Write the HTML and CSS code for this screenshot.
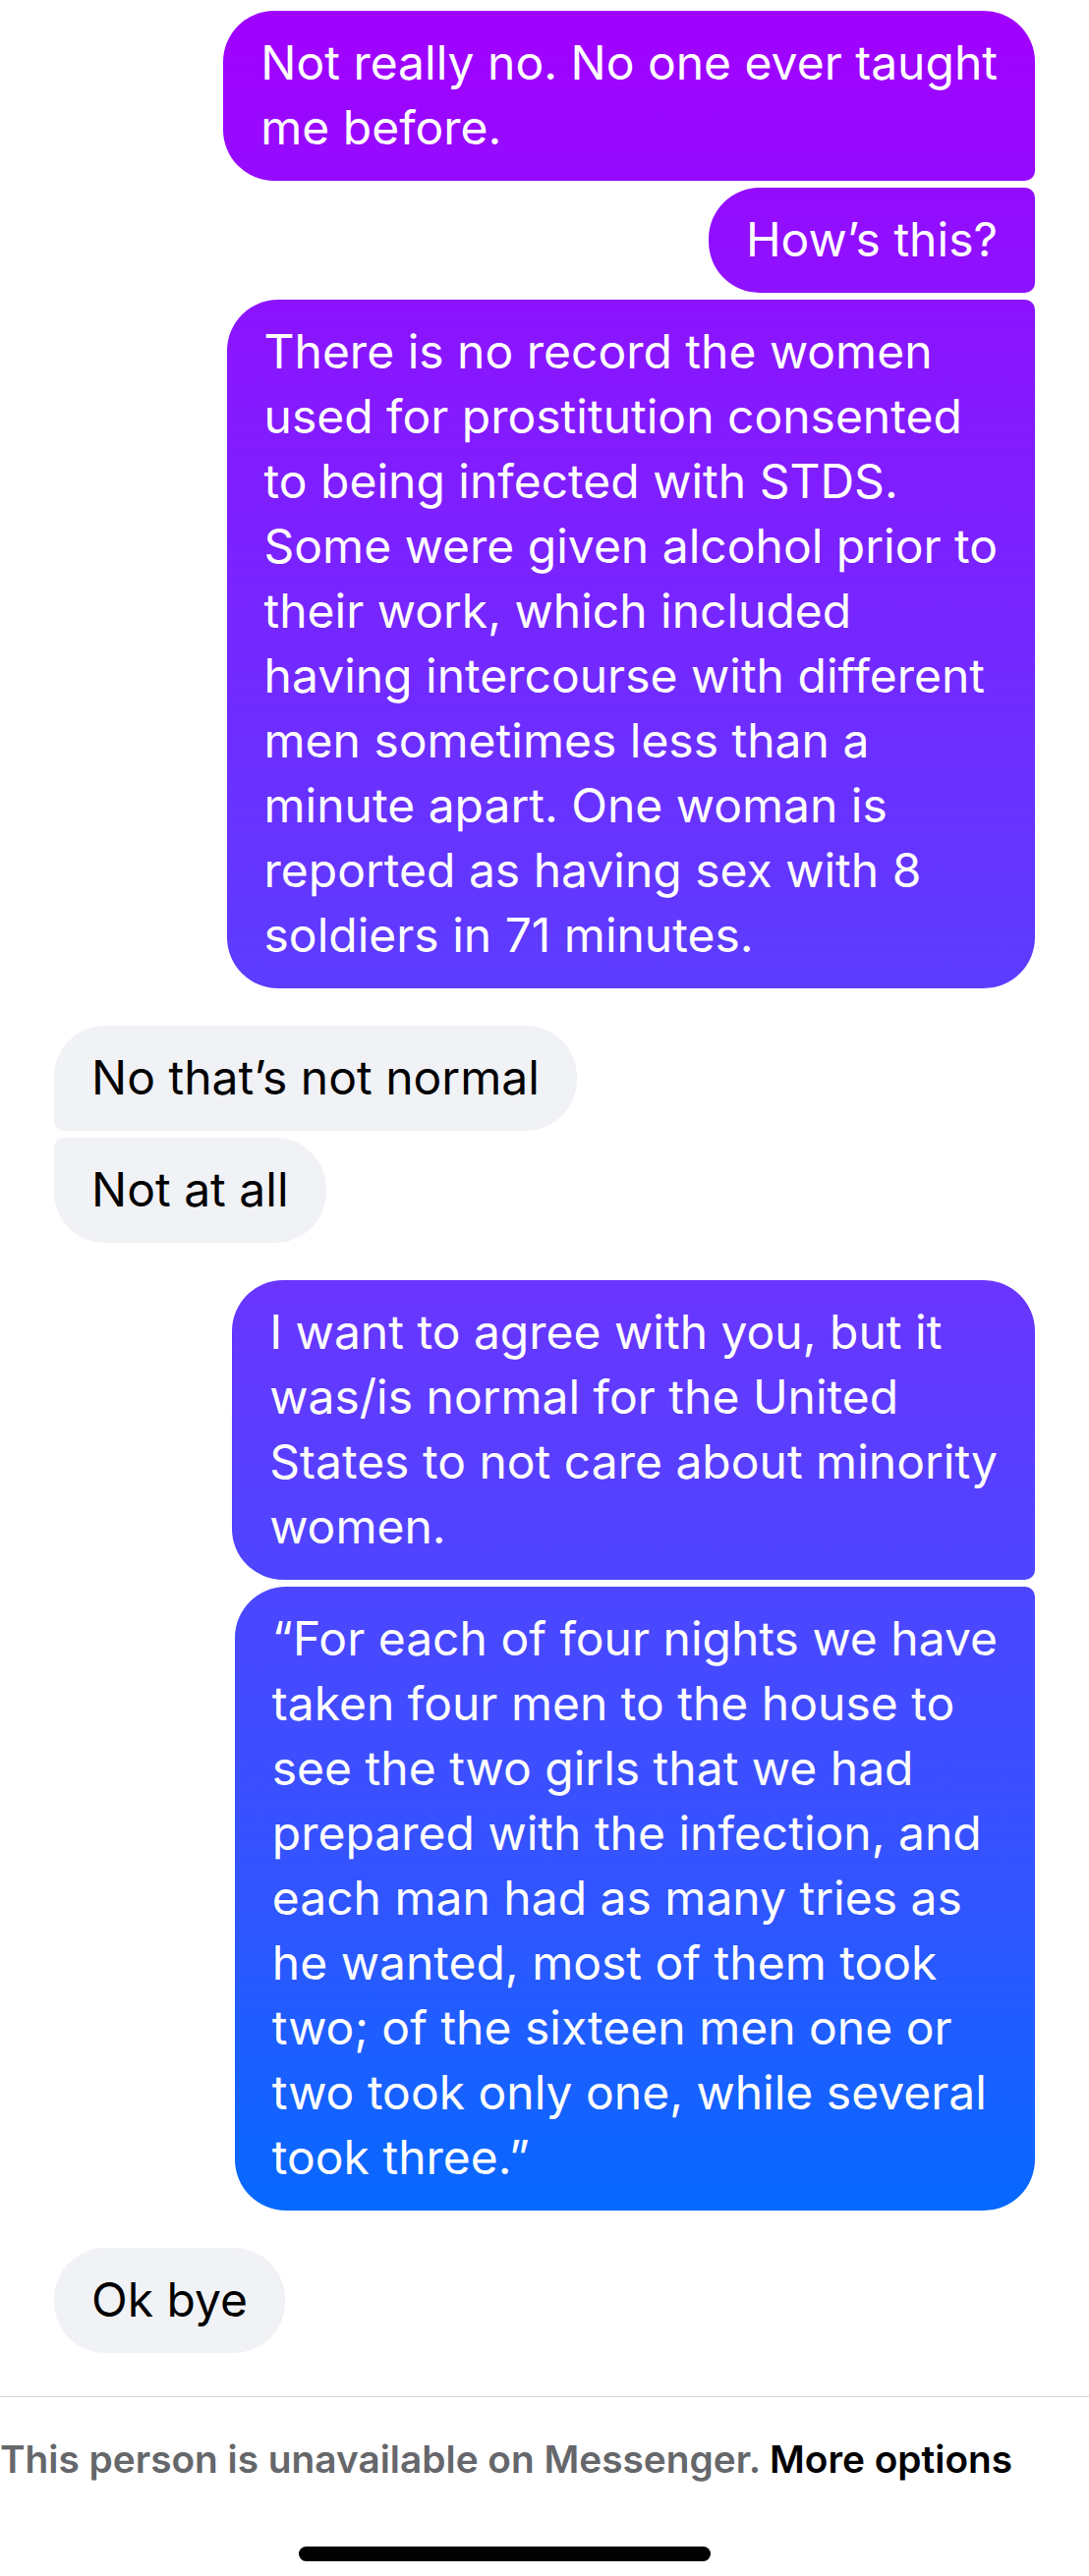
FILE: index.html
```html
<!DOCTYPE html>
<html lang="en">
<head>
<meta charset="utf-8">
<title>Messenger</title>
<link rel="stylesheet" href="styles.css">
</head>
<body>
<main class="chat">
  <section class="group sent">
    <div class="bubble first">Not really no. No one ever taught<br>me before.</div>
    <div class="bubble mid">How’s this?</div>
    <div class="bubble last">There is no record the women<br>used for prostitution consented<br>to being infected with STDS.<br>Some were given alcohol prior to<br>their work, which included<br>having intercourse with different<br>men sometimes less than a<br>minute apart. One woman is<br>reported as having sex with 8<br>soldiers in 71 minutes.</div>
  </section>
  <section class="group received">
    <div class="bubble first">No that’s not normal</div>
    <div class="bubble last">Not at all</div>
  </section>
  <section class="group sent">
    <div class="bubble first">I want to agree with you, but it<br>was/is normal for the United<br>States to not care about minority<br>women.</div>
    <div class="bubble last">“For each of four nights we have<br>taken four men to the house to<br>see the two girls that we had<br>prepared with the infection, and<br>each man had as many tries as<br>he wanted, most of them took<br>two; of the sixteen men one or<br>two took only one, while several<br>took three.”</div>
  </section>
  <section class="group received">
    <div class="bubble single">Ok bye</div>
  </section>
</main>
<div class="divider"></div>
<footer class="notice"><span class="muted">This person is unavailable on Messenger.</span> <span class="action">More options</span></footer>
<div class="home"><div class="home-bar"></div></div>
</body>
</html>
```

FILE: styles.css
```css
html, body {
  margin: 0;
  padding: 0;
  background: #ffffff;
}

body {
  font-family: Inter, "Noto Sans", "Liberation Sans", sans-serif;
  width: 1108px;
  overflow: hidden;
}

.chat {
  padding: 11px 55px 0;
  display: flex;
  flex-direction: column;
  gap: 38px;
}

.group {
  display: flex;
  flex-direction: column;
  gap: 7px;
}

.sent {
  align-items: flex-end;
}

.received {
  align-items: flex-start;
}

.bubble {
  padding: 20px 38px 21px 38px;
  font-size: 48px;
  letter-spacing: 0;
  line-height: 66px;
  white-space: nowrap;
  border-radius: 52px;
}

.sent .bubble {
  color: #ffffff;
  background-image: linear-gradient(180deg,
    #a200ff 0px,
    #5b3dff 1010px,
    #6b34ff 1295px,
    #4c46ff 1620px,
    #2f56ff 1950px,
    #0569ff 2255px);
  background-attachment: fixed;
}

.received .bubble {
  color: #000000;
  background: #f1f2f6;
}

.sent .first {
  border-bottom-right-radius: 10px;
}

.sent .mid {
  border-top-right-radius: 10px;
  border-bottom-right-radius: 10px;
}

.sent .last {
  border-top-right-radius: 10px;
}

.received .first {
  border-bottom-left-radius: 10px;
}

.received .last {
  border-top-left-radius: 10px;
}

.divider {
  height: 1px;
  background: #d6d6d8;
  margin-top: 44px;
}

.notice {
  margin-top: 41px;
  font-size: 38.8px;
  line-height: 44px;
  font-weight: 600;
  white-space: nowrap;
}

.muted {
  color: #65676b;
}

.action {
  color: #000000;
}

.home {
  margin-top: 67px;
  padding-left: 304px;
}

.home-bar {
  width: 419px;
  height: 15px;
  border-radius: 8px;
  background: #000000;
}
```
